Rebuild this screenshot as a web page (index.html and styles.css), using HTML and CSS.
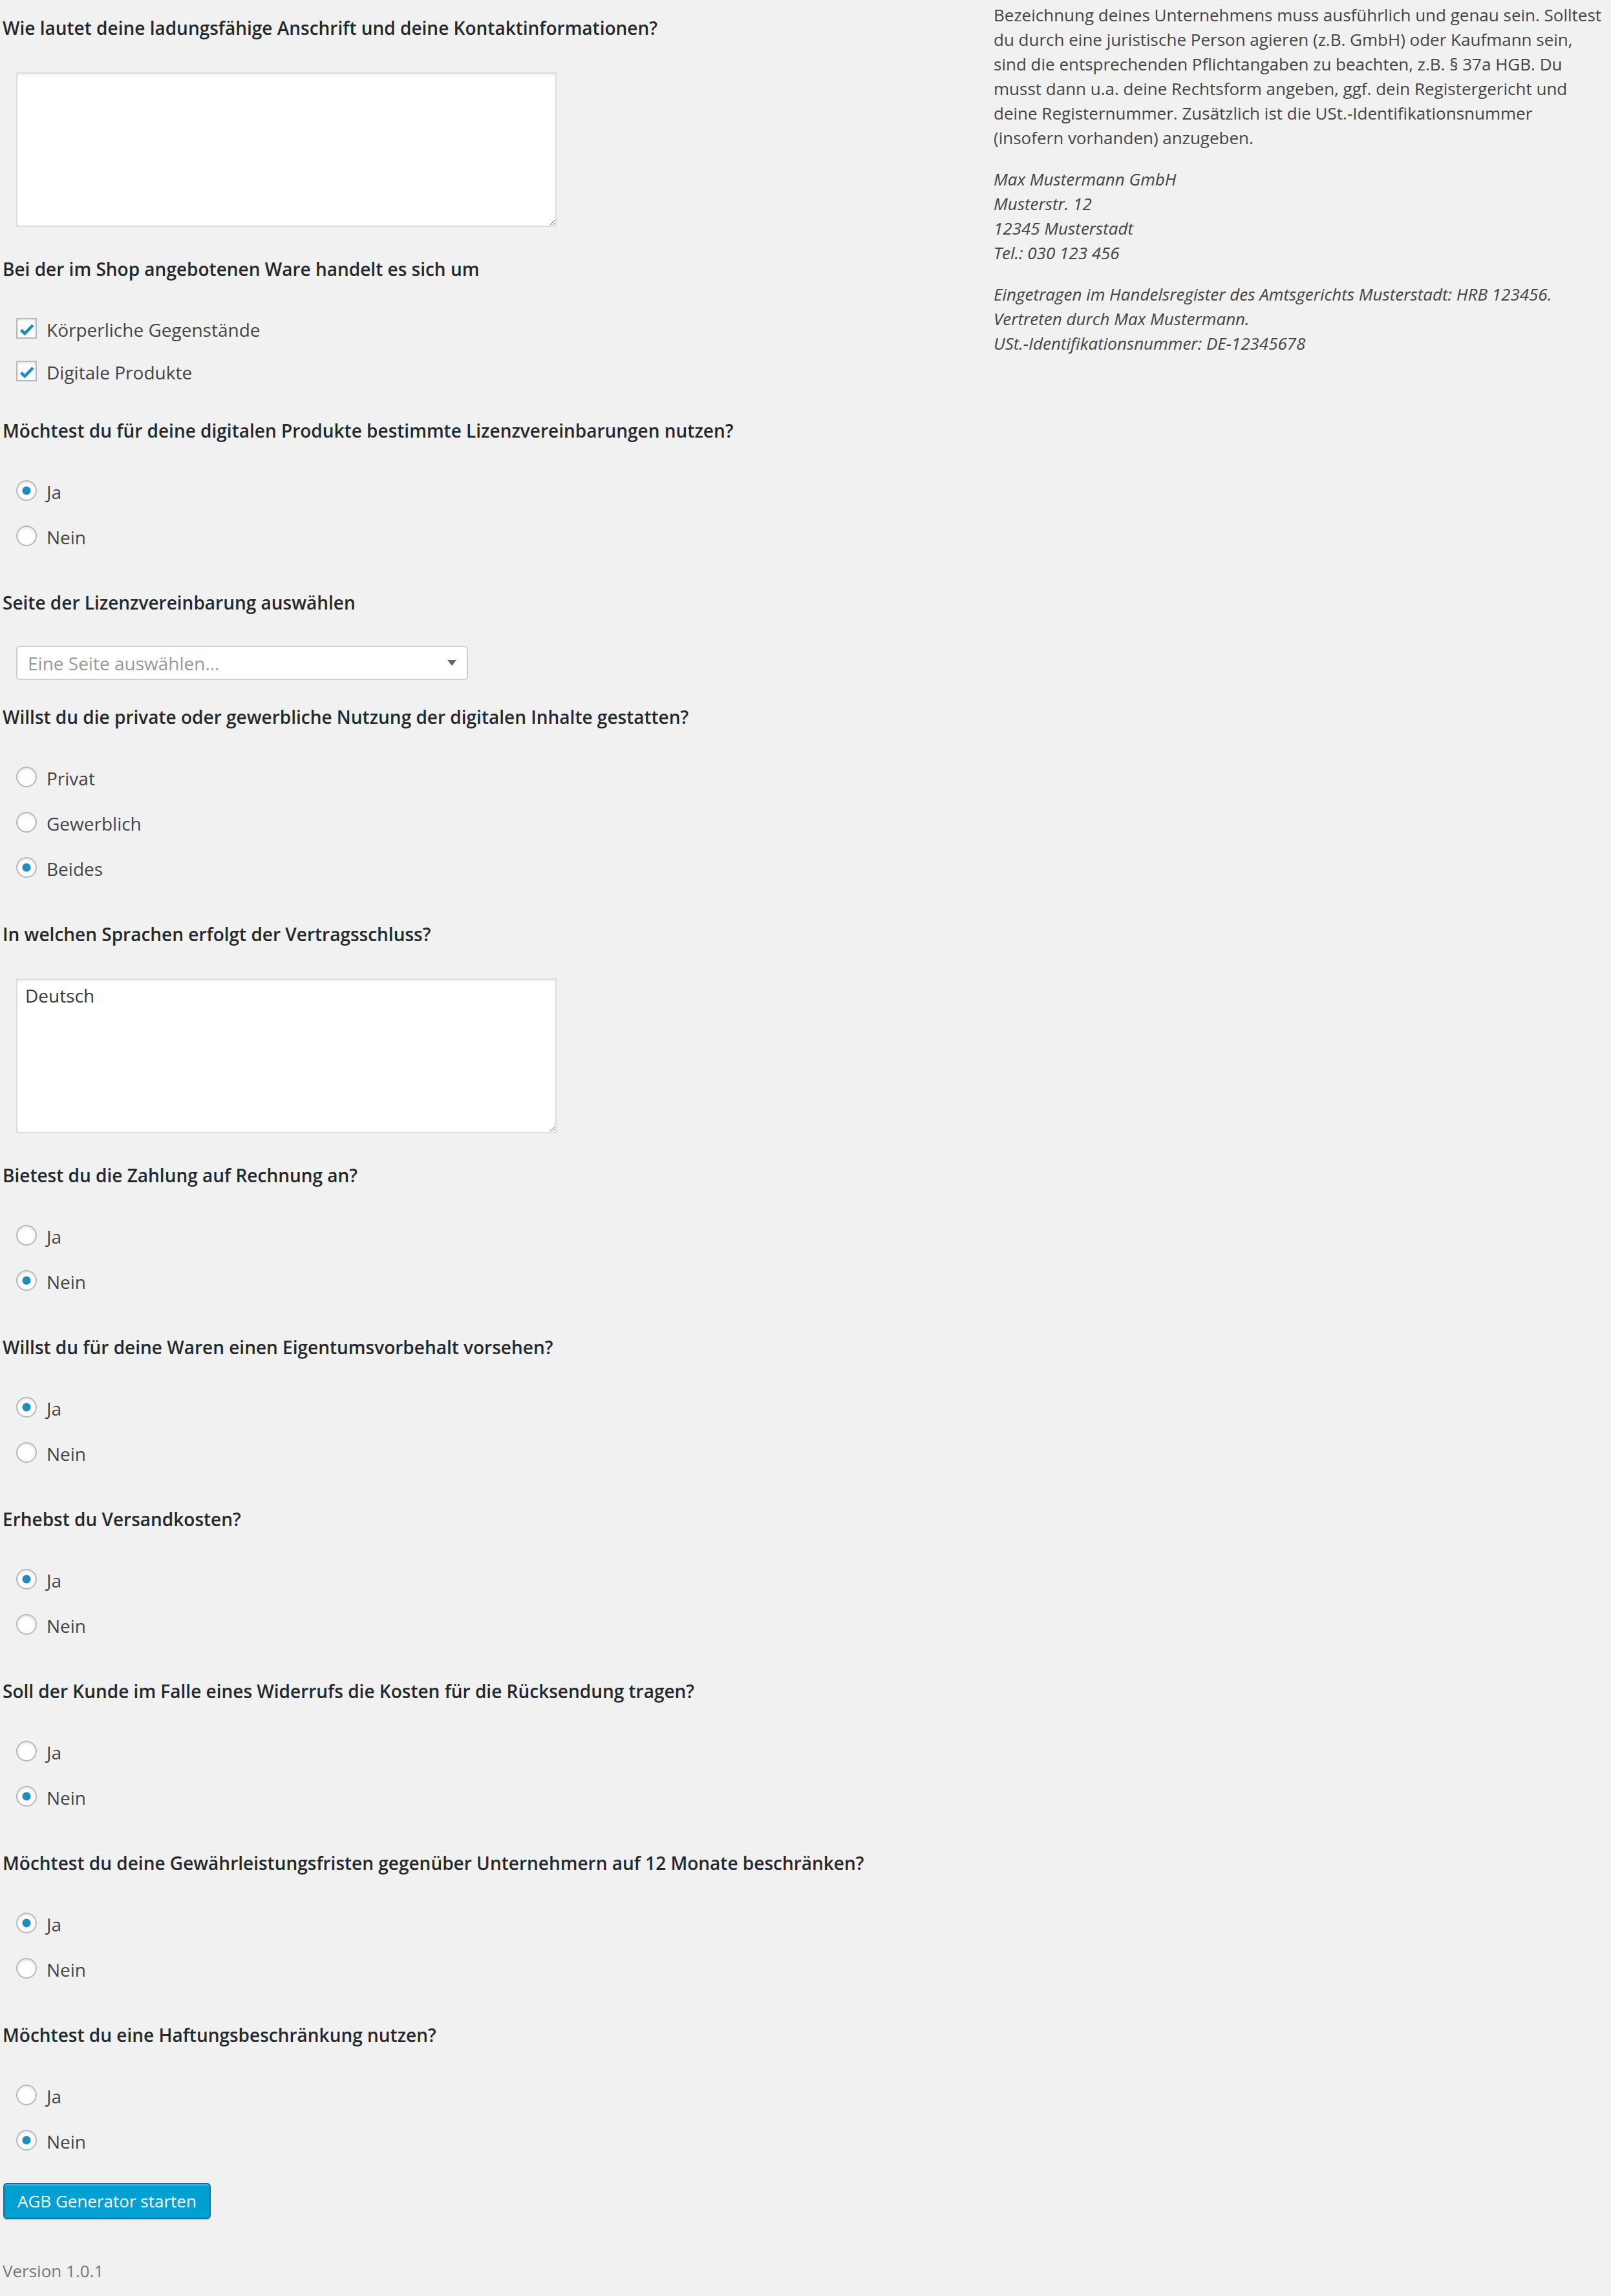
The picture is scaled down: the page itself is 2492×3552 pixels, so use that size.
FILE: index.html
```html
<!DOCTYPE html>
<html lang="de">
<head>
    <meta charset="UTF-8">
    <meta name="viewport" content="width=device-width, initial-scale=1.0">
    <title>AGB Generator</title>
    <link rel="stylesheet" href="styles.css">
</head>
<body>

<div class="wrap">
    <!-- Fragen -->
    <form class="agb-form">
        <div class="field">
            <p class="question">Wie lautet deine ladungsfähige Anschrift und deine Kontaktinformationen?</p>
            <textarea class="text-input" rows="5"></textarea>
        </div>

        <div class="field">
            <p class="question">Bei der im Shop angebotenen Ware handelt es sich um</p>
            <div class="choices checks">
                <label class="choice">
                    <span class="checkbox" role="checkbox" aria-checked="true">
                        <svg width="28" height="28" viewBox="0 0 28 28"><polyline points="5.5,16.5 11.3,22 24,9" fill="none" stroke="#1e8cbe" stroke-width="4.6"/></svg>
                    </span>
                    <span class="choice-text">Körperliche Gegenstände</span>
                </label>
                <label class="choice">
                    <span class="checkbox" role="checkbox" aria-checked="true">
                        <svg width="28" height="28" viewBox="0 0 28 28"><polyline points="5.5,16.5 11.3,22 24,9" fill="none" stroke="#1e8cbe" stroke-width="4.6"/></svg>
                    </span>
                    <span class="choice-text">Digitale Produkte</span>
                </label>
            </div>
        </div>

        <div class="field">
            <p class="question">Möchtest du für deine digitalen Produkte bestimmte Lizenzvereinbarungen nutzen?</p>
            <div class="choices">
                <label class="choice"><input type="radio" name="lizenz" checked><span class="choice-text">Ja</span></label>
                <label class="choice"><input type="radio" name="lizenz"><span class="choice-text">Nein</span></label>
            </div>
        </div>

        <div class="field">
            <p class="question">Seite der Lizenzvereinbarung auswählen</p>
            <div class="select">
                <span class="select-placeholder">Eine Seite auswählen...</span>
                <span class="select-arrow"></span>
            </div>
        </div>

        <div class="field">
            <p class="question">Willst du die private oder gewerbliche Nutzung der digitalen Inhalte gestatten?</p>
            <div class="choices">
                <label class="choice"><input type="radio" name="nutzung"><span class="choice-text">Privat</span></label>
                <label class="choice"><input type="radio" name="nutzung"><span class="choice-text">Gewerblich</span></label>
                <label class="choice"><input type="radio" name="nutzung" checked><span class="choice-text">Beides</span></label>
            </div>
        </div>

        <div class="field">
            <p class="question">In welchen Sprachen erfolgt der Vertragsschluss?</p>
            <textarea class="text-input" rows="5">Deutsch</textarea>
        </div>

        <div class="field">
            <p class="question">Bietest du die Zahlung auf Rechnung an?</p>
            <div class="choices">
                <label class="choice"><input type="radio" name="rechnung"><span class="choice-text">Ja</span></label>
                <label class="choice"><input type="radio" name="rechnung" checked><span class="choice-text">Nein</span></label>
            </div>
        </div>

        <div class="field">
            <p class="question">Willst du für deine Waren einen Eigentumsvorbehalt vorsehen?</p>
            <div class="choices">
                <label class="choice"><input type="radio" name="vorbehalt" checked><span class="choice-text">Ja</span></label>
                <label class="choice"><input type="radio" name="vorbehalt"><span class="choice-text">Nein</span></label>
            </div>
        </div>

        <div class="field">
            <p class="question">Erhebst du Versandkosten?</p>
            <div class="choices">
                <label class="choice"><input type="radio" name="versand" checked><span class="choice-text">Ja</span></label>
                <label class="choice"><input type="radio" name="versand"><span class="choice-text">Nein</span></label>
            </div>
        </div>

        <div class="field">
            <p class="question">Soll der Kunde im Falle eines Widerrufs die Kosten für die Rücksendung tragen?</p>
            <div class="choices">
                <label class="choice"><input type="radio" name="widerruf"><span class="choice-text">Ja</span></label>
                <label class="choice"><input type="radio" name="widerruf" checked><span class="choice-text">Nein</span></label>
            </div>
        </div>

        <div class="field">
            <p class="question">Möchtest du deine Gewährleistungsfristen gegenüber Unternehmern auf 12 Monate beschränken?</p>
            <div class="choices">
                <label class="choice"><input type="radio" name="gewaehr" checked><span class="choice-text">Ja</span></label>
                <label class="choice"><input type="radio" name="gewaehr"><span class="choice-text">Nein</span></label>
            </div>
        </div>

        <div class="field last">
            <p class="question">Möchtest du eine Haftungsbeschränkung nutzen?</p>
            <div class="choices">
                <label class="choice"><input type="radio" name="haftung"><span class="choice-text">Ja</span></label>
                <label class="choice"><input type="radio" name="haftung" checked><span class="choice-text">Nein</span></label>
            </div>
        </div>

        <div class="actions">
            <button type="button" class="button-primary">AGB Generator starten</button>
        </div>

        <p class="version">Version 1.0.1</p>
    </form>

    <!-- Hinweise rechts -->
    <aside class="help">
        <p>Bezeichnung deines Unternehmens muss ausführlich und genau sein. Solltest<br>du durch eine juristische Person agieren (z.B. GmbH) oder Kaufmann sein,<br>sind die entsprechenden Pflichtangaben zu beachten, z.B. § 37a HGB. Du<br>musst dann u.a. deine Rechtsform angeben, ggf. dein Registergericht und<br>deine Registernummer. Zusätzlich ist die USt.-Identifikationsnummer<br>(insofern vorhanden) anzugeben.</p>
        <p><em>Max Mustermann GmbH<br>Musterstr. 12<br>12345 Musterstadt<br>Tel.: 030 123 456</em></p>
        <p><em>Eingetragen im Handelsregister des Amtsgerichts Musterstadt: HRB 123456.<br>Vertreten durch Max Mustermann.<br>USt.-Identifikationsnummer: DE-12345678</em></p>
    </aside>
</div>

</body>
</html>
```

FILE: styles.css
```css
body {
    margin: 0;
    font-family: "Open Sans", "Liberation Sans", sans-serif;
    font-size: 26px;
    color: #444;
    background-color: #f1f1f1;
}

.wrap {
    display: grid;
    grid-template-columns: 1537px 1fr;
}

/* Formular links */
.agb-form {
    display: flex;
    flex-direction: column;
    align-items: flex-start;
    padding: 24px 0 0 4px;
}

.field {
    display: flex;
    flex-direction: column;
    align-items: flex-start;
    font-size: 28px;
}

.question {
    margin: 0;
    line-height: 38px;
    font-weight: 600;
    color: #23282d;
}

.text-input {
    box-sizing: border-box;
    width: 836px;
    height: 239px;
    margin: 50px 0 46px 21px;
    padding: 6px 12px 4px;
    border: 2px solid #ddd;
    box-shadow: inset 0 2px 4px rgba(0, 0, 0, 0.07);
    background-color: #fff;
    font-family: inherit;
    font-size: 28px;
    line-height: 36px;
    color: #32373c;
}

/* Radio- und Checkbox-Listen */
.choices {
    display: flex;
    flex-direction: column;
    gap: 38px;
    margin: 58px 0 68px 21px;
}

.choices.checks {
    gap: 34px;
    margin: 57px 0 57px 21px;
}

.field.last .choices {
    margin-bottom: 0;
}

.choice {
    display: flex;
    align-items: center;
    gap: 15px;
    height: 32px;
    line-height: 38px;
}

.choice-text {
    padding-top: 4px;
}

.choice input[type="radio"] {
    appearance: none;
    -webkit-appearance: none;
    flex: none;
    box-sizing: border-box;
    width: 32px;
    height: 32px;
    margin: 0;
    border: 2px solid #b4b9be;
    border-radius: 50%;
    background: #fff;
    box-shadow: inset 0 2px 4px rgba(0, 0, 0, 0.1);
}

.choice input[type="radio"]:checked {
    background: radial-gradient(circle, #1e8cbe 0, #1e8cbe 6px, #fff 7px);
}

.checkbox {
    flex: none;
    box-sizing: border-box;
    display: flex;
    width: 32px;
    height: 32px;
    border: 2px solid #b4b9be;
    background: #fff;
    box-shadow: inset 0 2px 4px rgba(0, 0, 0, 0.1);
}

/* Seitenauswahl */
.select {
    box-sizing: border-box;
    display: flex;
    align-items: center;
    justify-content: space-between;
    width: 699px;
    height: 53px;
    margin: 48px 0 38px 21px;
    padding: 0 16px;
    border: 2px solid #cfcfcf;
    border-radius: 6px;
    background-color: #fff;
}

.select-placeholder {
    color: #999;
    line-height: 38px;
}

.select-arrow {
    width: 0;
    height: 0;
    border-left: 7px solid transparent;
    border-right: 7px solid transparent;
    border-top: 9px solid #666;
}

/* Button */
.actions {
    margin: 50px 0 0 1px;
}

.button-primary {
    box-sizing: border-box;
    height: 56px;
    padding: 0 20px;
    border: 2px solid #0073aa;
    border-radius: 6px;
    background-color: #00a0d2;
    box-shadow: inset 0 2px 0 rgba(120, 200, 230, 0.5), 0 2px 0 rgba(0, 0, 0, 0.15);
    font-family: inherit;
    font-size: 26px;
    color: #fff;
    cursor: pointer;
}

.version {
    margin: 61px 0 0;
    line-height: 38px;
    color: #777;
}

/* Hinweise rechts */
.help {
    padding-top: 4px;
}

.help p {
    margin: 0 0 26px;
    line-height: 38px;
    white-space: nowrap;
}
```
